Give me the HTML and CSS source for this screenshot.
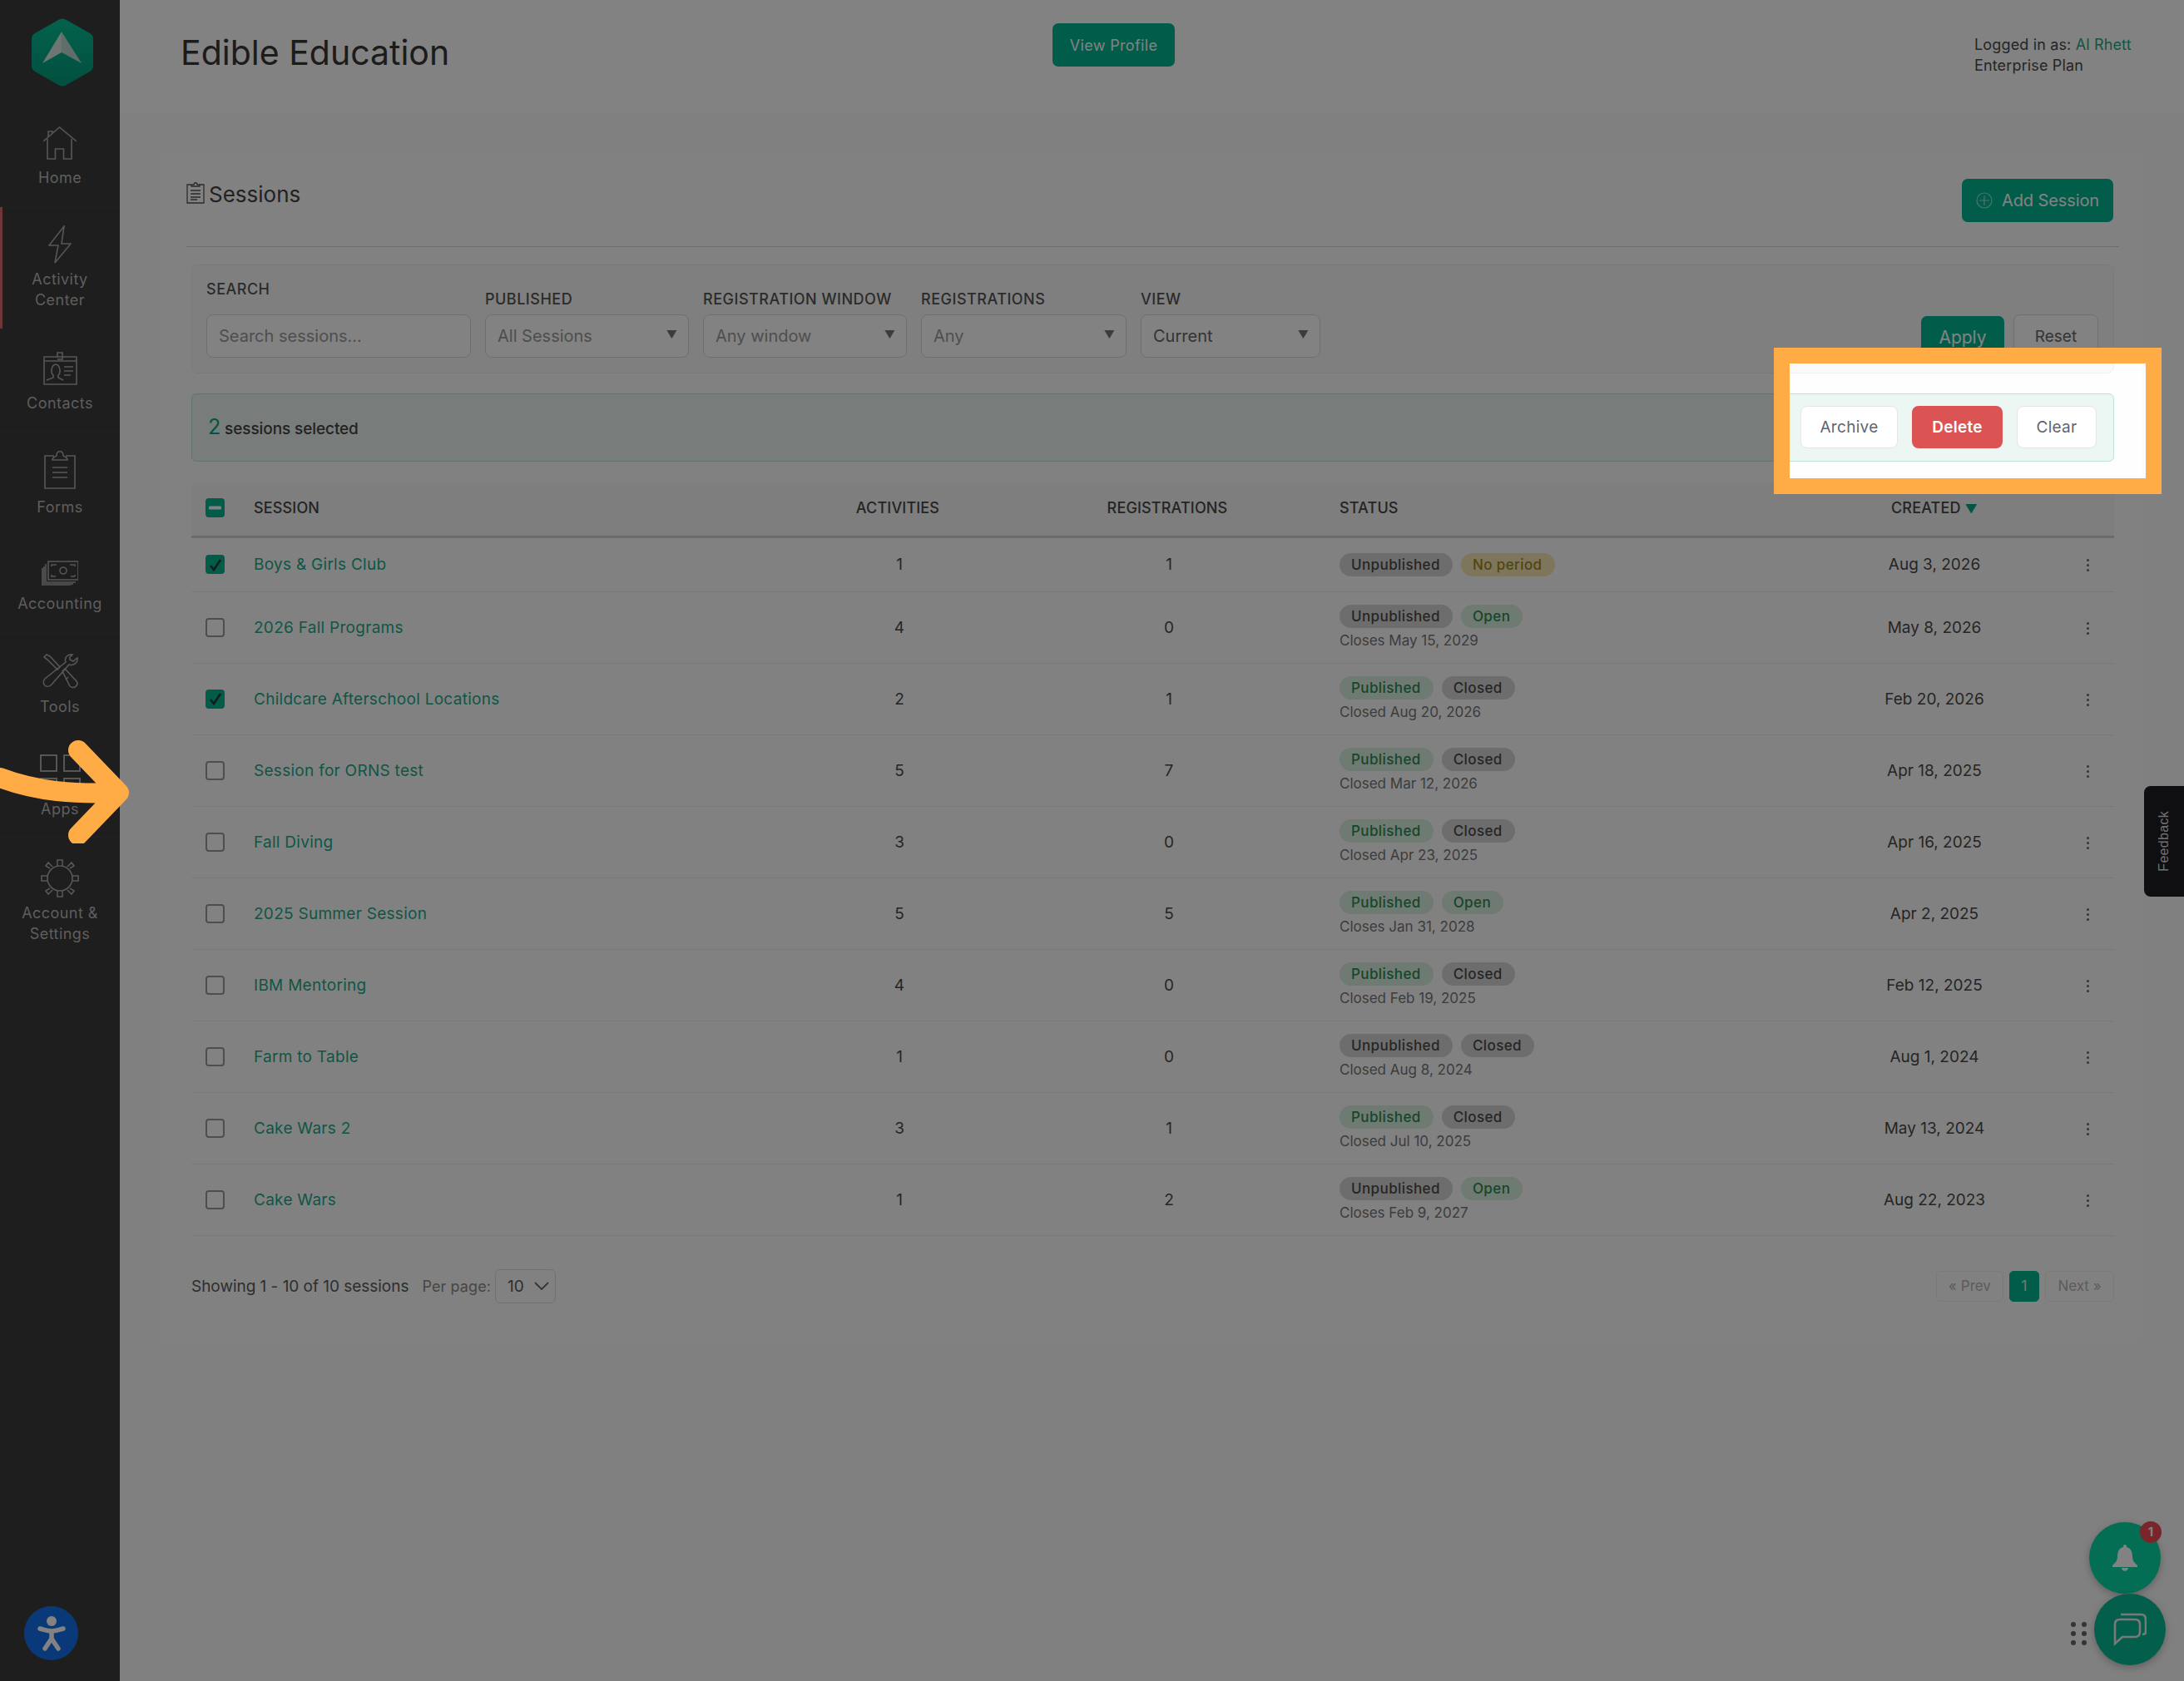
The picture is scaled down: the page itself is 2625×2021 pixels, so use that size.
FILE: index.html
```html
<!DOCTYPE html>
<html lang="en">
<head>
<meta charset="utf-8">
<title>Sessions</title>
<link rel="stylesheet" href="styles.css">
</head>
<body>
<div class="app">
  <aside class="sidebar">
    <div class="logo-row">
      <svg class="logo" viewBox="0 0 74 82"><defs><linearGradient id="lg" x1="0" y1="0" x2="0" y2="1"><stop offset="0" stop-color="#05c096"/><stop offset="1" stop-color="#049c7c"/></linearGradient></defs><path d="M32 2 Q37 -1 42 2 L70 18 Q74 20 74 25 L74 57 Q74 62 70 64 L42 80 Q37 83 32 80 L4 64 Q0 62 0 57 L0 25 Q0 20 4 18 Z" fill="url(#lg)"/><path d="M36 16 L13 54 L36 41 Z" fill="#d8e8e2"/><path d="M36 16 L60 54 L36 41 Z" fill="#bcd8ce"/></svg>
    </div>
    <nav class="nav">
      <a class="nav-item nav-home"><svg class="ico" width="40" height="40" viewBox="0 0 40 40"><path d="M0 18 L19.500 1 L40 18 M5 15 V39 H14.500 V27 H24.500 V39 H34 V15 M6 13 V6 H11 V8"/></svg><span>Home</span></a>
      <a class="nav-item nav-activity active"><svg class="ico" width="28" height="46" viewBox="0 0 28 46"><path d="M19 1 L1 24 H12 L8 45 L27 22 H16 Z"/></svg><span>Activity<br>Center</span></a>
      <a class="nav-item nav-contacts"><svg class="ico" width="41" height="40" viewBox="0 0 41 40"><path d="M1 6 H40 V39 H1 Z M1 11 H40 M17 6 V1 H23 V9 H17 M4 34 L12 31 V28 C9 26 9 16 15 15 C21 16 21 26 18 28 V31 L24 34 M25 18 H36 M25 23 H36 M25 28 H33"/></svg><span>Contacts</span></a>
      <a class="nav-item nav-forms"><svg class="ico" width="38" height="46" viewBox="0 0 38 46"><path d="M12 6 H1 V45 H37 V6 H26 M10 11 C10 7 14 7 15 6 C15 -1 23 -1 23 6 C24 7 28 7 28 11 Z M10 20 H28 M10 26 H28 M10 32 H28"/></svg><span>Forms</span></a>
      <a class="nav-item nav-accounting"><svg class="ico" width="44" height="30" viewBox="0 0 44 30"><path d="M8 1 H44 V23 H8 Z M5 4 V26 H41 M3 7 V28 H38 M1 9 V30 H35 M12 7 V5 H18 M40 19 V17 M12 17 V19 H17 M34 5 H40 V7 M35 19 H40"/><circle cx="26" cy="12" r="4"/></svg><span>Accounting</span></a>
      <a class="nav-item nav-tools"><svg class="ico" width="43" height="42" viewBox="0 0 43 42"><path d="M2 4 L5 1 L9 3 L21 16 L18 19 L6 7 Z M24 21 L27 18 L41 33 C44 38 38 43 33 39 Z M31 28 L28 31 M36 1 C30 0 26 5 28 10 L3 30 C-2 36 5 43 11 37 L32 13 C38 15 43 10 42 5 L37 9 L33 7 L33 4 Z"/></svg><span>Tools</span></a>
      <a class="nav-item nav-apps"><div class="apps-grid"><i></i><i></i><i></i><i></i></div><span>Apps</span></a>
      <a class="nav-item nav-account"><svg class="ico" width="46" height="46" viewBox="0 0 46 46"><circle cx="23" cy="23" r="15"/><path d="M20 8 V1 H26 V8 M20 38 V45 H26 V38 M8 20 H1 V26 H8 M38 20 H45 V26 H38 M11 11 L6 8 L9 4 L14 9 M35 11 L40 8 L37 4 L32 9 M11 35 L6 38 L9 42 L14 37 M35 35 L40 38 L37 42 L32 37"/></svg><span>Account &amp;<br>Settings</span></a>
    </nav>
    <div class="a11y"><svg width="34" height="44" viewBox="0 0 34 44"><circle cx="17" cy="7" r="6"/><path d="M3 16 C10 18 12 19 17 19 C22 19 24 18 31 16 M17 19 V28 M17 28 L9 40 M17 28 L25 40" fill="none" stroke-width="5.500" stroke-linecap="round"/></svg></div>
  </aside>

  <div class="main">
    <header class="topbar">
      <h1>Edible Education</h1>
      <a class="btn-primary view-profile">View Profile</a>
      <div class="user-info">Logged in as: <a>Al Rhett</a><br>Enterprise Plan</div>
    </header>

    <section class="card">
      <div class="card-head">
        <h2><svg class="ico-dark" width="22" height="26" viewBox="0 0 22 26"><path d="M6 3 H1 V25 H21 V3 H16 M6 5 V3 H9 C9 0 13 0 13 3 H16 V5 Z M5 10 H17 M5 14 H17 M5 18 H17 M5 21 H13"/></svg>Sessions</h2>
        <a class="btn-primary add-session"><svg width="20" height="20" viewBox="0 0 20 20"><circle cx="10" cy="10" r="9"/><path d="M10 4 V16 M4 10 H16"/></svg>Add Session</a>
      </div>

      <form class="filters">
        <label class="field field-search"><span class="lbl lbl-search">SEARCH</span><span class="input placeholder">Search sessions...</span></label>
        <label class="field field-pub"><span class="lbl">PUBLISHED</span><span class="input select">All Sessions</span></label>
        <label class="field field-win"><span class="lbl">REGISTRATION WINDOW</span><span class="input select">Any window</span></label>
        <label class="field field-reg"><span class="lbl">REGISTRATIONS</span><span class="input select">Any</span></label>
        <label class="field field-view"><span class="lbl">VIEW</span><span class="input select current">Current</span></label>
        <div class="filter-btns"><a class="btn-primary apply">Apply</a><a class="btn-reset">Reset</a></div>
      </form>

      <div class="bulk">
        <div class="bulk-count"><b>2</b> sessions selected</div>
        <div class="bulk-btns"><a class="btn-white archive">Archive</a><a class="btn-delete">Delete</a><a class="btn-white clear">Clear</a></div>
      </div>

      <table class="sessions">
        <colgroup><col class="c1"><col class="c2"><col class="c3"><col class="c4"><col class="c5"><col class="c6"><col class="c7"></colgroup>
        <thead>
          <tr><th><span class="cb on"><svg width="15" height="5" viewBox="0 0 15 5"><rect width="15" height="4" y="0.500" rx="1" fill="#fff"/></svg></span></th><th class="left">SESSION</th><th>ACTIVITIES</th><th>REGISTRATIONS</th><th class="left">STATUS</th><th>CREATED <span class="sort">▼</span></th><th></th></tr>
        </thead>
        <tbody>
          <tr class="first"><td><span class="cb on"><svg width="16" height="16" viewBox="0 0 16 16"><path d="M2 9 L6 14 L14 2"/></svg></span></td><td class="left"><a>Boys &amp; Girls Club</a></td><td>1</td><td>1</td><td class="left"><span class="bdg gray">Unpublished</span><span class="bdg yellow">No period</span></td><td>Aug 3, 2026</td><td class="kb"><i></i></td></tr>
          <tr><td><span class="cb"></span></td><td class="left"><a>2026 Fall Programs</a></td><td>4</td><td>0</td><td class="left"><span class="bdg gray">Unpublished</span><span class="bdg green">Open</span><div class="sub">Closes May 15, 2029</div></td><td>May 8, 2026</td><td class="kb"><i></i></td></tr>
          <tr><td><span class="cb on"><svg width="16" height="16" viewBox="0 0 16 16"><path d="M2 9 L6 14 L14 2"/></svg></span></td><td class="left"><a>Childcare Afterschool Locations</a></td><td>2</td><td>1</td><td class="left"><span class="bdg green">Published</span><span class="bdg gray">Closed</span><div class="sub">Closed Aug 20, 2026</div></td><td>Feb 20, 2026</td><td class="kb"><i></i></td></tr>
          <tr><td><span class="cb"></span></td><td class="left"><a>Session for ORNS test</a></td><td>5</td><td>7</td><td class="left"><span class="bdg green">Published</span><span class="bdg gray">Closed</span><div class="sub">Closed Mar 12, 2026</div></td><td>Apr 18, 2025</td><td class="kb"><i></i></td></tr>
          <tr><td><span class="cb"></span></td><td class="left"><a>Fall Diving</a></td><td>3</td><td>0</td><td class="left"><span class="bdg green">Published</span><span class="bdg gray">Closed</span><div class="sub">Closed Apr 23, 2025</div></td><td>Apr 16, 2025</td><td class="kb"><i></i></td></tr>
          <tr><td><span class="cb"></span></td><td class="left"><a>2025 Summer Session</a></td><td>5</td><td>5</td><td class="left"><span class="bdg green">Published</span><span class="bdg green">Open</span><div class="sub">Closes Jan 31, 2028</div></td><td>Apr 2, 2025</td><td class="kb"><i></i></td></tr>
          <tr><td><span class="cb"></span></td><td class="left"><a>IBM Mentoring</a></td><td>4</td><td>0</td><td class="left"><span class="bdg green">Published</span><span class="bdg gray">Closed</span><div class="sub">Closed Feb 19, 2025</div></td><td>Feb 12, 2025</td><td class="kb"><i></i></td></tr>
          <tr><td><span class="cb"></span></td><td class="left"><a>Farm to Table</a></td><td>1</td><td>0</td><td class="left"><span class="bdg gray">Unpublished</span><span class="bdg gray">Closed</span><div class="sub">Closed Aug 8, 2024</div></td><td>Aug 1, 2024</td><td class="kb"><i></i></td></tr>
          <tr><td><span class="cb"></span></td><td class="left"><a>Cake Wars 2</a></td><td>3</td><td>1</td><td class="left"><span class="bdg green">Published</span><span class="bdg gray">Closed</span><div class="sub">Closed Jul 10, 2025</div></td><td>May 13, 2024</td><td class="kb"><i></i></td></tr>
          <tr><td><span class="cb"></span></td><td class="left"><a>Cake Wars</a></td><td>1</td><td>2</td><td class="left"><span class="bdg gray">Unpublished</span><span class="bdg green">Open</span><div class="sub">Closes Feb 9, 2027</div></td><td>Aug 22, 2023</td><td class="kb"><i></i></td></tr>
        </tbody>
      </table>

      <div class="pager-row">
        <div class="showing">Showing 1 - 10 of 10 sessions<span class="per">Per page:</span><span class="per-sel">10<svg width="18" height="10" viewBox="0 0 18 10"><path d="M1 1 L9 9 L17 1"/></svg></span></div>
        <div class="pager"><span class="pg prev">« Prev</span><span class="pg cur">1</span><span class="pg next">Next »</span></div>
      </div>
    </section>
  </div>
</div>

<div class="feedback"><span>Feedback</span></div>

<div class="fab fab-bell"><svg width="30" height="32" viewBox="0 0 30 32"><path d="M15 0 C17 0 17 2 17 3 C22 4 24 9 24 14 C24 20 27 22 30 25 V27 H0 V25 C3 22 6 20 6 14 C6 9 8 4 13 3 C13 2 13 0 15 0 Z M11 28 H19 C19 33 11 33 11 28 Z" fill="#fff"/></svg><span class="fab-badge">1</span></div>
<div class="grip"><i></i><i></i><i></i><i></i><i></i><i></i></div>
<div class="fab fab-chat"><svg width="40" height="40" viewBox="0 0 40 40"><path d="M2 37 V14 Q2 8 8 8 H26 Q32 8 32 14 V23 Q32 29 26 29 H11 Z M9 2 H33 Q39 2 39 8 V23 Q39 26 35 26" fill="none" stroke="#eee" stroke-width="2.600"/></svg></div>

<div class="spotlight"></div>
<svg class="arrow" width="156" height="124" viewBox="0 0 156 124"><path d="M0 45 C45 62 90 65 142 63 M94 12 L143 63 L94 114" fill="none" stroke="#ffac47" stroke-width="24" stroke-linecap="round" stroke-linejoin="round"/></svg>
</body>
</html>
```

FILE: styles.css
```css
* { box-sizing: border-box; }
html, body { margin: 0; padding: 0; height: 2021px; overflow: hidden; }
body { font-family: "Inter", "Liberation Sans", sans-serif; color: #444; background: #fbfbfb; font-size: 19px; }
a { text-decoration: none; color: inherit; }
.app { display: flex; height: 2021px; }

/* sidebar */
.sidebar { position: relative; width: 144px; flex: none; background: #3b3b3b; color: #b8b8b8; }
.logo-row { height: 124px; padding: 22px 0 0 38px; border-bottom: 1px solid #414141; }
.logo { width: 74px; height: 82px; display: block; }
.nav { display: grid; grid-template-rows: 125px 147px 124px 125px 116px 124px 122px 143px; }
.nav-item { display: flex; flex-direction: column; align-items: center; justify-content: flex-end; padding-bottom: 22px; border-bottom: 1px solid #414141; text-align: center; font-size: 18px; line-height: 25px; letter-spacing: .45px; }
.nav-account { border-bottom: none; padding-bottom: 15px; }
.nav-activity .ico, .nav-account .ico { margin-bottom: 6px; }
.nav-apps { padding-bottom: 21px; }
.nav-item.active { box-shadow: inset 3px 0 0 #d86a6a; }
.ico { display: block; margin-bottom: 9px; fill: none; stroke: #aaa; stroke-width: 1.600; }
.apps-grid { display: grid; grid-template-columns: 21px 21px; gap: 7px; margin-bottom: 4px; }
.apps-grid i { display: block; height: 21px; border: 2px solid #aaa; }
.a11y { position: absolute; left: 29px; top: 1931px; width: 65px; height: 65px; border-radius: 50%; background: #1570f0; display: flex; align-items: center; justify-content: center; }
.a11y svg { fill: #fff; stroke: #fff; }
.a11y circle { stroke: none; }

/* main */
.main { flex: 1; min-width: 0; }
.topbar { position: relative; height: 136px; background: #fff; display: flex; }
.topbar h1 { margin: 0; padding: 38px 0 0 73px; width: 1121px; font-size: 41px; line-height: 50px; font-weight: 400; color: #383838; }
.btn-primary { display: flex; align-items: center; justify-content: center; background: #04b491; color: #fff; border-radius: 7px; }
.view-profile { margin-top: 28px; width: 147px; height: 52px; font-size: 18px; letter-spacing: .35px; font-weight: 400; }
.user-info { margin-left: 961px; padding-top: 41px; font-size: 18px; line-height: 25px; color: #4a4a4a; white-space: nowrap; letter-spacing: .15px; }
.user-info a { color: #1fa98a; }

.card { margin: 50px 50px 0 46px; height: 1427px; padding: 29px 28px 0 34px; background: #fefefe; }
.card-head { display: flex; align-items: flex-start; justify-content: space-between; height: 82px; border-bottom: 1px solid #d4d4d4; padding-right: 7px; }
.card-head h2 { margin: 4px 0 0 0; display: flex; align-items: center; font-size: 26px; line-height: 30px; font-weight: 400; color: #444; }
.ico-dark { fill: none; stroke: #555; stroke-width: 1.300; margin-right: 5px; margin-top: -5px; }
.add-session { width: 182px; height: 52px; font-size: 20px; gap: 11px; letter-spacing: -.1px; }
.add-session svg { fill: none; stroke: #9de4d2; stroke-width: 1.200; }

.filters { display: flex; align-items: flex-end; margin: 21px 6px 0 6px; height: 131px; padding: 0 18px 18px 17px; background: #fafafa; border: 1px solid #f0f0f0; border-radius: 8px; gap: 17px; }
.field { display: flex; flex-direction: column; flex: none; }
.field-search { width: 318px; }
.field-pub { width: 245px; }
.field-win { width: 245px; }
.field-reg { width: 247px; }
.field-view { width: 216px; }
.lbl { font-size: 18px; line-height: 20px; font-weight: 500; color: #555; margin-bottom: 8px; white-space: nowrap; letter-spacing: .5px; }
.lbl-search { margin-bottom: 20px; }
.input { position: relative; display: block; height: 52px; border: 1px solid #d8d8d8; border-radius: 8px; background: #fff; padding-left: 14px; font-size: 20px; line-height: 50px; color: #9a9a9a; }
.select::after { content: "▼"; position: absolute; right: 13px; top: -2px; font-size: 13px; color: #777; }
.current { color: #666; }
.filter-btns { margin-left: auto; display: flex; align-items: flex-end; gap: 11px; }
.apply { width: 100px; height: 50px; font-size: 21px; }
.btn-reset { display: flex; align-items: center; justify-content: center; width: 102px; height: 52px; border: 1px solid #dcdcdc; border-radius: 8px; background: #fff; font-size: 19px; color: #666; }

.bulk { display: flex; align-items: center; justify-content: space-between; margin: 24px 6px 0 6px; height: 82px; padding: 0 20px 0 19px; background: #ecf6f2; border: 1px solid #bde5d6; border-radius: 6px; }
.bulk-count { font-size: 19px; font-weight: 500; color: #444; margin-top: -2px; letter-spacing: -.1px; }
.bulk-count b { font-size: 25px; font-weight: 400; color: #04a585; }
.bulk-btns { display: flex; gap: 17px; margin-top: -2px; }
.btn-white, .btn-delete { display: flex; align-items: center; justify-content: center; height: 51px; border-radius: 8px; font-size: 19px; letter-spacing: .3px; }
.btn-white { background: #fff; border: 1px solid #e6e6e6; color: #5f6572; }
.archive { width: 117px; }
.clear { width: 96px; }
.btn-delete { width: 109px; background: #dc5353; color: #fff; font-weight: 600; }

.sessions { border-collapse: collapse; table-layout: fixed; margin: 26px 6px 0 6px; width: 2311px; font-size: 19px; color: #4a4a4a; }
.c1 { width: 74px; } .c2 { width: 656px; } .c3 { width: 238px; } .c4 { width: 410px; } .c5 { width: 592px; } .c6 { width: 250px; } .c7 { width: 91px; }
.sessions th { height: 64px; padding: 0 0 3px; background: #f7f7f7; border-bottom: 3px solid #d2d2d2; font-size: 18px; font-weight: 500; color: #484848; text-align: center; letter-spacing: .15px; }
.sessions th:first-child, .sessions td:first-child { padding-left: 17px; text-align: left; }
.sessions th:nth-child(2) { padding-left: 1px; }
.sessions td { height: 86px; padding: 0; text-align: center; border-bottom: 1px solid #ededed; }
.sessions td:nth-child(3), .sessions td:nth-child(4) { padding-left: 4px; }
.sessions .first td { height: 66px; }
.sessions .left { text-align: left; }
.sessions td.left:nth-child(5), .sessions th.left:nth-child(5) { padding-left: 2px; }
.sessions a { color: #1fa98a; letter-spacing: .28px; }
.sessions td.left:nth-child(2) { padding-left: 1px; }
.sort { color: #04a585; font-size: 15px; }
.cb { display: flex; align-items: center; justify-content: center; width: 23px; height: 23px; border: 2px solid #9a9a9a; border-radius: 4px; background: #fff; vertical-align: middle; }
.cb.on { background: #04b491; border-color: #04b491; }
.cb svg path { fill: none; stroke: #333; stroke-width: 2.600; }
.bdg { display: inline-block; height: 28px; padding: 0 15px 0 14px; margin-right: 10px; border-radius: 14px; font-size: 17px; line-height: 28px; font-weight: 500; vertical-align: top; letter-spacing: .4px; }
.gray { background: #d6d6d6; color: #4a4a4a; }
.green { background: #d8f0e0; color: #2f8a50; }
.yellow { background: #f5e6b4; color: #a08820; }
.sub { margin-top: 4px; font-size: 17px; line-height: 22px; color: #777; }
.kb { padding-left: 27px !important; }
.kb i { display: inline-block; width: 3px; height: 3px; border-radius: 50%; background: #666; box-shadow: 0 -6px 0 #666, 0 6px 0 #666; vertical-align: middle; }

.pager-row { display: flex; justify-content: space-between; margin: 40px 6px 0 6px; height: 41px; }
.showing { display: flex; align-items: center; font-size: 19px; color: #5a5a5a; letter-spacing: -.03px; }
.per { margin-left: 16px; font-size: 18px; color: #8a8a8a; letter-spacing: .1px; }
.per-sel { display: flex; align-items: center; justify-content: space-between; width: 73px; height: 41px; margin-left: 5px; padding: 0 7px 0 14px; border: 1px solid #dedede; border-radius: 6px; }
.per-sel svg { fill: none; stroke: #666; stroke-width: 1.800; }
.pager { display: flex; gap: 7px; margin-top: 2px; }
.pg { display: flex; align-items: center; justify-content: center; height: 37px; border: 1px solid #f0f0f0; border-radius: 5px; font-size: 17px; color: #b4b4b4; }
.prev { width: 81px; }
.next { width: 83px; }
.cur { width: 36px; background: #04b491; border-color: #04b491; color: #d8f5ee; }

/* floating */
.feedback { position: absolute; left: 2577px; top: 945px; width: 48px; height: 133px; background: #1e1f22; border-radius: 8px 0 0 8px; display: flex; align-items: center; justify-content: center; }
.feedback span { writing-mode: vertical-rl; transform: rotate(180deg); font-family: "Liberation Sans", sans-serif; font-size: 16px; color: #ddd; letter-spacing: .3px; }
.fab { position: absolute; width: 86px; height: 86px; border-radius: 50%; display: flex; align-items: center; justify-content: center; box-shadow: 0 3px 10px rgba(0,0,0,.25); }
.fab-bell { left: 2511px; top: 1830px; background: #08d8a8; }
.fab-chat { left: 2517px; top: 1916px; background: #08b896; }
.fab-badge { position: absolute; right: -1px; top: -1px; width: 26px; height: 26px; border-radius: 50%; background: #ee4a52; color: #fff; font-size: 14px; line-height: 26px; font-weight: 700; text-align: center; }
.grip { position: absolute; left: 2489px; top: 1950px; display: grid; grid-template-columns: 6px 6px; gap: 5px 7px; }
.grip i { display: block; width: 6px; height: 6px; border-radius: 50%; background: #666; }

.spotlight { position: absolute; left: 2132px; top: 418px; width: 466px; height: 176px; border: 19px solid #ffac47; box-shadow: 0 0 0 4000px rgba(0,0,0,.49); z-index: 10; }
.arrow { position: absolute; left: 0; top: 890px; z-index: 11; }
```
